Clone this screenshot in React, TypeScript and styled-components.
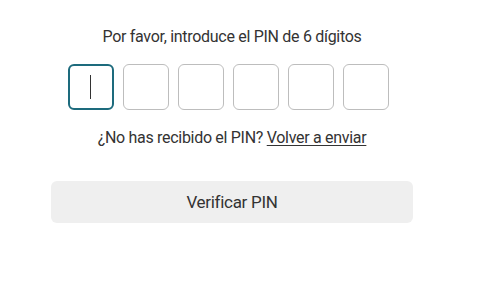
import styled, { createGlobalStyle } from 'styled-components';

const GlobalStyle = createGlobalStyle`
  html, body {
    margin: 0;
    padding: 0;
    background: #ffffff;
  }
  body {
    font-family: Roboto, 'Open Sans', sans-serif;
    color: #333333;
  }
`;

const Page = styled.main`
  width: 464px;
  display: flex;
  flex-direction: column;
  align-items: center;
  padding-top: 26px;
`;

const Prompt = styled.p`
  margin: 0;
  font-size: 16px;
  line-height: 22px;
  letter-spacing: -0.3px;
  color: #333333;
`;

const PinRow = styled.div`
  display: flex;
  gap: 9px;
  margin: 16px 8px 0 0;
`;

const PinBox = styled.div<{ $active?: boolean }>`
  box-sizing: border-box;
  width: 46px;
  height: 46px;
  border-radius: 6px;
  border: ${(p) => (p.$active ? '2px solid #1d6b7d' : '1px solid #bdbdbd')};
  display: flex;
  align-items: center;
  justify-content: center;
`;

const Caret = styled.span`
  width: 1px;
  height: 24px;
  background: #333333;
`;

const Resend = styled.p`
  margin: 17px 0 0;
  font-size: 16px;
  line-height: 22px;
  letter-spacing: -0.3px;
`;

const ResendLink = styled.a`
  color: #333333;
  text-decoration: underline;
  text-underline-offset: 2px;
`;

const VerifyButton = styled.button`
  margin-top: 32px;
  width: 362px;
  height: 42px;
  border: none;
  border-radius: 6px;
  background: #efefef;
  font-family: inherit;
  font-size: 17px;
  letter-spacing: -0.3px;
  color: #333333;
`;

export default function App() {
  return (
    <>
      <GlobalStyle />
      <Page>
        <Prompt>Por favor, introduce el PIN de 6 dígitos</Prompt>
        <PinRow>
          {[0, 1, 2, 3, 4, 5].map((i) => (
            <PinBox key={i} $active={i === 0}>
              {i === 0 && <Caret />}
            </PinBox>
          ))}
        </PinRow>
        <Resend>
          ¿No has recibido el PIN? <ResendLink href="#">Volver a enviar</ResendLink>
        </Resend>
        <VerifyButton>Verificar PIN</VerifyButton>
      </Page>
    </>
  );
}
